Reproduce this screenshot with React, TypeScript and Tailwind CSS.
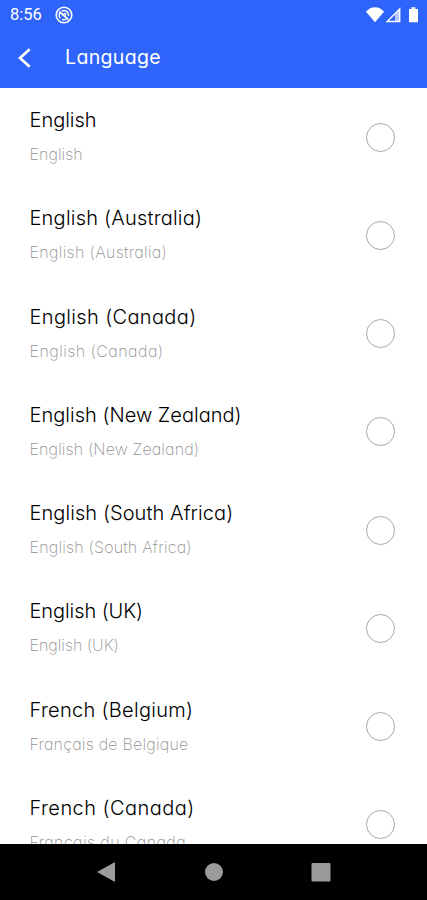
import clsx from "clsx";

type Language = {
  name: string;
  nativeName: string;
  nameSpacing: string;
  nativeSpacing: string;
};

const languages: Language[] = [
  { name: "English", nativeName: "English", nameSpacing: "tracking-[-0.02px]", nativeSpacing: "tracking-[0.05px]" },
  { name: "English (Australia)", nativeName: "English (Australia)", nameSpacing: "tracking-[0.22px]", nativeSpacing: "tracking-[0.32px]" },
  { name: "English (Canada)", nativeName: "English (Canada)", nameSpacing: "tracking-[0.36px]", nativeSpacing: "tracking-[0.45px]" },
  { name: "English (New Zealand)", nativeName: "English (New Zealand)", nameSpacing: "tracking-[0.02px]", nativeSpacing: "tracking-[0.12px]" },
  { name: "English (South Africa)", nativeName: "English (South Africa)", nameSpacing: "tracking-[0.08px]", nativeSpacing: "tracking-[0.2px]" },
  { name: "English (UK)", nativeName: "English (UK)", nameSpacing: "tracking-[-0.08px]", nativeSpacing: "tracking-[-0.02px]" },
  { name: "French (Belgium)", nativeName: "Français de Belgique", nameSpacing: "tracking-[0.3px]", nativeSpacing: "tracking-[0.22px]" },
  { name: "French (Canada)", nativeName: "Français du Canada", nameSpacing: "tracking-[0.45px]", nativeSpacing: "tracking-[0.4px]" },
];

function StatusBar() {
  return (
    <div className="flex h-[30px] items-center justify-between pl-[10px] pr-2 text-white">
      <div className="flex items-center gap-[13px]">
        <span className="font-['Roboto',sans-serif] text-[16.5px] leading-[32px]">8:56</span>
        <svg width="18" height="18" viewBox="0 0 18 18" fill="none">
          <circle cx="9" cy="9" r="7.8" stroke="currentColor" strokeWidth="1.6" />
          <path d="M5.3 12.2A4.7 4.7 0 0 1 4.8 7M6.6 5.1A4.7 4.7 0 0 1 13.5 10M11.8 12.8a4.7 4.7 0 0 1-4.7.5" stroke="currentColor" strokeWidth="1.4" />
          <path d="m4.2 5.5 9.2 8" stroke="currentColor" strokeWidth="1.7" />
          <path d="M8 7h3.2v3.2z" fill="currentColor" />
        </svg>
      </div>
      <svg width="53" height="18" viewBox="0 0 53 18" fill="currentColor">
        <path d="M0 5.7C5-.1 13-.1 18 5.7L9 16.3z" />
        <path d="M33.7 3v12.5H21.2z" fill="none" stroke="currentColor" strokeWidth="1.4" />
        <path d="M29 8.5 34 3v12.8h-5z" fillOpacity=".65" />
        <path d="M43 3h2.4V1.2h4V3H52v13.2h-9z" />
      </svg>
    </div>
  );
}

function Header() {
  return (
    <header className="h-[88px] shrink-0 bg-[#2e64fa]">
      <StatusBar />
      <div className="flex h-[56px] items-center pl-[17px] text-white">
        <svg width="15" height="20" viewBox="0 0 15 20" fill="none" stroke="currentColor" strokeWidth="2.7">
          <path d="M12.7 1.2 3 10l9.7 8.8" />
        </svg>
        <h1 className="ml-[33px] pb-[2px] text-[19.5px] font-normal leading-[54px] tracking-[0.35px]">Language</h1>
      </div>
    </header>
  );
}

function LanguageRow({ language }: { language: Language }) {
  return (
    <li className="flex h-[98.25px] shrink-0 items-center justify-between pl-[29.5px] pr-[32px]">
      <div className="flex flex-col whitespace-nowrap">
        <span className={clsx("w-fit text-[20px] font-light leading-[35px] text-black", language.nameSpacing)}>
          {language.name}
        </span>
        <span className={clsx("w-fit text-[16px] font-extralight leading-[33px] text-[#929292]", language.nativeSpacing)}>
          {language.nativeName}
        </span>
      </div>
      <span className="size-[29px] rounded-full border border-[#a8a8a8]" />
    </li>
  );
}

function NavigationBar() {
  return (
    <nav className="flex h-[56px] shrink-0 items-center bg-black pl-[97px] text-[#9b9b9b]">
      <svg width="234" height="22" viewBox="0 0 234 22" fill="currentColor">
        <path d="M0 11 18 1v20z" />
        <circle cx="117" cy="11" r="9" />
        <rect x="214.5" y="2" width="19" height="18.5" rx="1" />
      </svg>
    </nav>
  );
}

export default function App() {
  return (
    // cv11 is Inter's single-storey a
    <div className="flex h-[900px] w-[427px] flex-col overflow-hidden bg-white font-['Inter',sans-serif] [font-feature-settings:'cv11']">
      <Header />
      <ul className="flex min-h-0 flex-1 flex-col overflow-hidden">
        {languages.map((language) => (
          <LanguageRow key={language.name} language={language} />
        ))}
      </ul>
      <NavigationBar />
    </div>
  );
}
